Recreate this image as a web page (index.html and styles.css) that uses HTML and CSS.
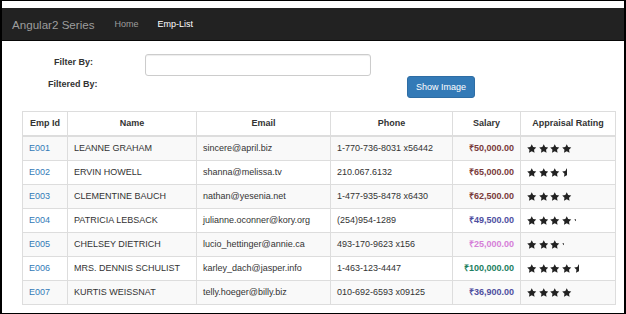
FILE: index.html
```html
<!DOCTYPE html>
<html>
<head>
<meta charset="utf-8">
<link rel="stylesheet" href="styles.css">
</head>
<body>
<div class="frame">
  <nav class="navbar">
    <span class="brand">Angular2 Series</span>
    <a class="nav-link">Home</a>
    <a class="nav-link active">Emp-List</a>
  </nav>
  <div class="filters">
    <div class="filter-row">
      <label class="lbl lbl-filter">Filter By:</label>
      <input class="filter-input" type="text">
    </div>
    <div class="filter-row second">
      <label class="lbl lbl-filtered">Filtered By:</label>
      <button class="btn">Show Image</button>
    </div>
  </div>
  <table class="grid">
    <colgroup>
      <col class="c-id"><col class="c-name"><col class="c-email"><col class="c-phone"><col class="c-sal"><col class="c-rate">
    </colgroup>
    <thead>
      <tr><th>Emp Id</th><th>Name</th><th>Email</th><th>Phone</th><th>Salary</th><th>Appraisal Rating</th></tr>
    </thead>
    <tbody>
      <tr><td class="id">E001</td><td>LEANNE GRAHAM</td><td>sincere@april.biz</td><td>1-770-736-8031 x56442</td><td class="sal s-brown">₹50,000.00</td><td class="rate" data-r="4"></td></tr>
      <tr><td class="id">E002</td><td>ERVIN HOWELL</td><td>shanna@melissa.tv</td><td>210.067.6132</td><td class="sal s-brown">₹65,000.00</td><td class="rate" data-r="3.5"></td></tr>
      <tr><td class="id">E003</td><td>CLEMENTINE BAUCH</td><td>nathan@yesenia.net</td><td>1-477-935-8478 x6430</td><td class="sal s-brown">₹62,500.00</td><td class="rate" data-r="4"></td></tr>
      <tr><td class="id">E004</td><td>PATRICIA LEBSACK</td><td>julianne.oconner@kory.org</td><td>(254)954-1289</td><td class="sal s-slate">₹49,500.00</td><td class="rate" data-r="4.25"></td></tr>
      <tr><td class="id">E005</td><td>CHELSEY DIETRICH</td><td>lucio_hettinger@annie.ca</td><td>493-170-9623 x156</td><td class="sal s-orchid">₹25,000.00</td><td class="rate" data-r="3.25"></td></tr>
      <tr><td class="id">E006</td><td>MRS. DENNIS SCHULIST</td><td>karley_dach@jasper.info</td><td>1-463-123-4447</td><td class="sal s-green">₹100,000.00</td><td class="rate" data-r="4.5"></td></tr>
      <tr><td class="id">E007</td><td>KURTIS WEISSNAT</td><td>telly.hoeger@billy.biz</td><td>010-692-6593 x09125</td><td class="sal s-slate">₹36,900.00</td><td class="rate" data-r="4"></td></tr>
    </tbody>
  </table>
</div>
<script>
document.querySelectorAll('.rate').forEach(function (td) {
  var r = parseFloat(td.getAttribute('data-r'));
  var html = '';
  for (var i = 0; i < 5; i++) {
    var f = Math.max(0, Math.min(1, r - i));
    if (f <= 0) break;
    html += '<span class="star" style="width:' + (f * 9.5).toFixed(1) + 'px"><svg viewBox="1.5 1.5 21 21" width="9.5" height="9.5"><path d="M12 2l3.09 6.26L22 9.27l-5 4.87 1.18 6.88L12 17.77l-6.18 3.25L7 14.14 2 9.27l6.91-1.01z"/></svg></span>';
  }
  td.innerHTML = '<span class="stars">' + html + '</span>';
});
</script>
</body>
</html>
```

FILE: styles.css
```css
* { box-sizing: border-box; }
html, body { margin: 0; padding: 0; background: #fff; }
body {
  font-family: "Liberation Sans", Arial, sans-serif;
  font-size: 9px;
  color: #333;
}
.frame {
  width: 626px;
  height: 314px;
  border-style: solid;
  border-color: #000;
  border-width: 1px 2px 1px 2px;
  padding-top: 7px;
  overflow: hidden;
  background: #fff;
}
.navbar {
  height: 33px;
  background: #222;
  border-bottom: 1px solid #080808;
  display: flex;
  align-items: center;
  padding-left: 10px;
}
.brand {
  font-size: 11.6px;
  color: #9d9d9d;
  margin-right: 20px;
}
.nav-link {
  color: #9d9d9d;
  font-size: 9px;
  margin-right: 19px;
}
.nav-link.active { color: #fff; }

.filters {
  padding-left: 46px;
  margin-top: 13px;
}
.filter-row {
  display: flex;
  align-items: flex-start;
}
.lbl {
  font-weight: bold;
  font-size: 9px;
  line-height: 11px;
}
.lbl-filter {
  margin-left: 6px;
  margin-top: 3px;
  width: 91px;
}
.filter-input {
  width: 226px;
  height: 22px;
  border: 1px solid #ccc;
  border-radius: 3px;
  box-shadow: inset 0 1px 1px rgba(0,0,0,.075);
  margin: 0;
  padding: 0;
}
.second { margin-top: 0; }
.lbl-filtered {
  margin-top: 3px;
  width: 359px;
}
.btn {
  width: 68px;
  height: 22px;
  background: #337ab7;
  border: 1px solid #2e6da4;
  border-radius: 3px;
  color: #fff;
  font-family: "Liberation Sans", Arial, sans-serif;
  font-size: 9px;
  padding: 0;
  margin: 0;
}

.grid {
  margin-top: 13px;
  margin-left: 20px;
  width: 593px;
  border-collapse: collapse;
  table-layout: fixed;
  border: 1px solid #ddd;
}
.c-id { width: 45px; }
.c-name { width: 129px; }
.c-email { width: 134px; }
.c-phone { width: 122px; }
.c-sal { width: 68px; }
.c-rate { width: 95px; }
.grid th, .grid td {
  border: 1px solid #ddd;
  padding: 5px 6px;
  line-height: 13px;
  height: 24px;
  white-space: nowrap;
  overflow: hidden;
}
.grid th {
  font-weight: bold;
  text-align: center;
  border-bottom-width: 2px;
}
.grid tbody tr:nth-child(odd) { background: #f9f9f9; }
.id { color: #337ab7; }
.sal { text-align: right; font-weight: bold; }
.s-brown { color: #7a3b3b; }
.s-slate { color: #4f4f9f; }
.s-orchid { color: #d67fd8; }
.s-green { color: #1e7f5f; }
.rate { padding-top: 4px; padding-bottom: 4px; }
.stars { display: flex; align-items: center; height: 13px; }
.star {
  display: inline-block;
  overflow: hidden;
  height: 9.5px;
  margin-right: 2.2px;
  flex: none;
}
.star svg { display: block; fill: #222; }
```
